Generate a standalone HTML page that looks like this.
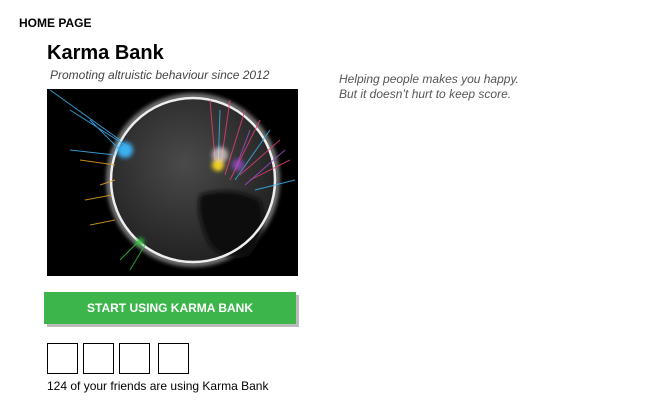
<!DOCTYPE html>
<html><head><style>
body{margin:0;width:646px;height:414px;background:#fff;font-family:"Liberation Sans",sans-serif;position:relative;overflow:hidden}
.a{position:absolute;white-space:nowrap}
.box{position:absolute;top:343px;width:29px;height:29px;border:1px solid #000}
</style></head><body>
<div class="a" style="left:19px;top:16px;font-size:12px;font-weight:bold">HOME PAGE</div>
<div class="a" style="left:47px;top:42px;font-size:20px;font-weight:bold">Karma Bank</div>
<div class="a" style="left:50px;top:68px;font-size:12px;font-style:italic;color:#444">Promoting altruistic behaviour since 2012</div>
<div class="a" style="left:339px;top:72px;font-size:12px;font-style:italic;color:#555;line-height:15px">Helping people makes you happy.<br>But it doesn’t hurt to keep score.</div>
<svg class="a" style="left:47px;top:89px" width="251" height="187" viewBox="47 89 251 187">
<defs><radialGradient id="g" cx="0.45" cy="0.4" r="0.6"><stop offset="0" stop-color="#4a4a4a"/><stop offset="1" stop-color="#222"/></radialGradient>
<filter id="b"><feGaussianBlur stdDeviation="2"/></filter></defs>
<rect x="47" y="89" width="251" height="187" fill="#000"/>
<circle cx="193" cy="180" r="84" fill="none" stroke="#888" stroke-width="5" filter="url(#b)"/>
<circle cx="193" cy="180" r="82" fill="url(#g)"/>
<path d="M200 195 q30 -10 60 5 q10 30 -10 55 q-20 10 -40 -10 q-15 -30 -10 -50z" fill="#0c0c0c" filter="url(#b)"/>
<circle cx="193" cy="180" r="82" fill="none" stroke="#eee" stroke-width="2.5"/>
<g stroke-width="1" opacity=".85">
<path d="M50 90 L120 140 M70 110 L125 145 M90 120 L120 150 M70 150 L115 155" stroke="#3ab0f0"/>
<path d="M80 160 L115 165 M100 185 L115 180 M85 200 L112 195 M90 225 L115 220" stroke="#e0a020"/>
<path d="M210 100 L215 160 M230 100 L220 170 M245 110 L225 175 M260 120 L230 180 M280 140 L240 175 M290 160 L250 180" stroke="#e04070"/>
<path d="M220 110 L218 170 M270 130 L235 180 M295 180 L255 190" stroke="#3ab0f0"/>
<path d="M250 130 L235 170 M285 150 L245 185" stroke="#a050d0"/>
<path d="M120 260 L140 240 M130 270 L145 245" stroke="#30c040"/>
</g>
<g filter="url(#b)">
<circle cx="125" cy="150" r="8" fill="#3ab0f0"/>
<circle cx="220" cy="155" r="8" fill="#f0e0e0" opacity=".7"/>
<circle cx="218" cy="165" r="6" fill="#f0d020"/>
<circle cx="238" cy="165" r="6" fill="#a050d0" opacity=".7"/>
<circle cx="140" cy="242" r="4" fill="#30c040"/>
</g>
</svg>
<div class="a" style="left:44px;top:292px;width:252px;height:32px;background:#3cb64b;box-shadow:3px 3px 0 #bbb;color:#fff;font-weight:bold;font-size:12px;text-align:center;line-height:32px">START USING KARMA BANK</div>
<div class="box" style="left:47px"></div>
<div class="box" style="left:83px"></div>
<div class="box" style="left:119px"></div>
<div class="box" style="left:158px"></div>
<div class="a" style="left:47px;top:379px;font-size:12px">124 of your friends are using Karma Bank</div>
</body></html>
